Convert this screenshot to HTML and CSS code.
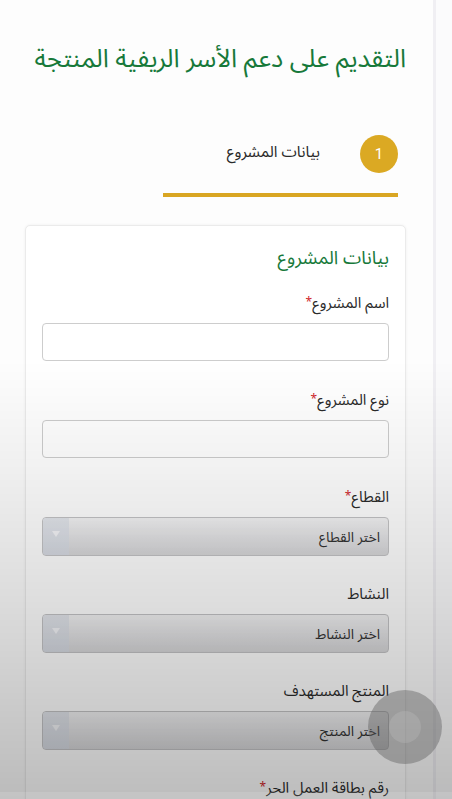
FILE: index.html
```html
<!DOCTYPE html>
<html lang="ar">
<head>
<meta charset="utf-8">
<title>التقديم على دعم الأسر الريفية المنتجة</title>
<link rel="stylesheet" href="styles.css">
</head>
<body>
<div class="page">
  <main class="main" dir="rtl">
    <h1 class="page-title">التقديم على دعم الأسر الريفية المنتجة</h1>

    <div class="stepper">
      <div class="step">
        <span class="step-num">1</span>
        <span class="step-label">بيانات المشروع</span>
      </div>
      <div class="step-bar"></div>
    </div>

    <section class="card">
      <h2 class="card-title">بيانات المشروع</h2>

      <div class="field">
        <label class="label">اسم المشروع<span class="req">*</span></label>
        <input class="input" type="text">
      </div>

      <div class="field">
        <label class="label">نوع المشروع<span class="req">*</span></label>
        <input class="input" type="text">
      </div>

      <div class="field">
        <label class="label">القطاع<span class="req">*</span></label>
        <div class="select"><span class="select-text">اختر القطاع</span><span class="select-arrow"></span></div>
      </div>

      <div class="field">
        <label class="label">النشاط</label>
        <div class="select"><span class="select-text">اختر النشاط</span><span class="select-arrow"></span></div>
      </div>

      <div class="field">
        <label class="label">المنتج المستهدف</label>
        <div class="select"><span class="select-text">اختر المنتج</span><span class="select-arrow"></span></div>
      </div>

      <div class="field">
        <label class="label">رقم بطاقة العمل الحر<span class="req">*</span></label>
        <input class="input" type="text">
      </div>
    </section>
  </main>
  <aside class="strip"></aside>
</div>
<div class="shade"></div>
<div class="touch"><span class="touch-core"></span></div>
<div class="navbar"></div>
</body>
</html>
```

FILE: styles.css
```css
html, body {
  margin: 0;
  padding: 0;
  background: #fdfdfd;
  font-family: "Noto Sans Arabic", "Noto Sans", "DejaVu Sans", sans-serif;
  overflow: hidden;
}

.page {
  display: flex;
  width: 452px;
  height: 799px;
  overflow: hidden;
}

.main {
  width: 433px;
  flex: none;
  box-sizing: border-box;
  padding: 0 27px 0 25px;
}

.strip {
  flex: 1;
  border-left: 3px solid #f0eff3;
  background: #fbfbfc;
}

.page-title {
  margin: 0;
  padding-top: 41px;
  height: 94px;
  box-sizing: border-box;
  font-size: 25.5px;
  font-weight: normal;
  line-height: 36px;
  color: #17793a;
  white-space: nowrap;
}

.stepper {
  width: 235px;
  margin-right: 8px;
}

.step {
  display: flex;
  align-items: center;
  gap: 40px;
  height: 40px;
  margin-top: 40px;
}

.step-num {
  width: 38px;
  height: 38px;
  border-radius: 50%;
  background: #dba923;
  color: #fff;
  font-family: "Roboto", sans-serif;
  font-size: 15px;
  display: flex;
  align-items: center;
  justify-content: center;
}

.step-label {
  font-size: 15.5px;
  color: #2a2a2a;
  margin-top: -4px;
}

.step-bar {
  height: 4px;
  background: #d9a623;
  margin-top: 19px;
}

.card {
  margin-top: 28px;
  border: 1px solid #ebebeb;
  border-radius: 5px;
  box-shadow: 0 0 3px rgba(0,0,0,0.06);
  background: #fff;
  padding: 18px 16px 40px 16px;
}

.card-title {
  margin: 0 0 17px 0;
  font-size: 18.5px;
  font-weight: normal;
  line-height: 30px;
  color: #17793a;
}

.field {
  display: flex;
  flex-direction: column;
  margin-bottom: 27px;
}

.field:nth-child(n+4) {
  margin-bottom: 26px;
}

.label {
  font-size: 15px;
  line-height: 24px;
  color: #2b2b2b;
  margin-bottom: 8px;
}

.req {
  color: #d0262c;
  font-size: 12px;
  vertical-align: top;
}

.input {
  height: 38px;
  box-sizing: border-box;
  border: 1px solid #cdcdcd;
  border-radius: 4px;
  background: #fff;
  margin: 0;
}

.select {
  height: 39px;
  box-sizing: border-box;
  border: 1px solid #c4c4c6;
  border-radius: 4px;
  background: linear-gradient(to bottom, #f3f3f4 0%, #e3e3e5 55%, #d7d7d9 100%);
  display: flex;
  align-items: center;
  justify-content: space-between;
  overflow: hidden;
}

.select-text {
  font-size: 14px;
  color: #333;
  padding-right: 8px;
  margin-top: 2px;
}

.select-arrow {
  width: 26px;
  align-self: stretch;
  background: linear-gradient(to bottom, #e3e6ec, #d6dae2);
  position: relative;
}

.select-arrow::after {
  content: "";
  position: absolute;
  left: 9px;
  top: 13px;
  border-left: 4px solid transparent;
  border-right: 4px solid transparent;
  border-top: 6px solid #f4f5f8;
}

.shade {
  position: fixed;
  inset: 0;
  pointer-events: none;
  background: linear-gradient(to bottom,
    rgba(0,0,0,0) 0%,
    rgba(0,0,0,0) 45%,
    rgba(0,0,0,0.05) 58%,
    rgba(0,0,0,0.13) 75%,
    rgba(0,0,0,0.26) 100%);
}

.touch {
  position: fixed;
  left: 368px;
  top: 690px;
  width: 74px;
  height: 74px;
  border-radius: 50%;
  background: rgba(90,90,90,0.42);
  display: flex;
  align-items: center;
  justify-content: center;
}

.touch-core {
  width: 32px;
  height: 32px;
  border-radius: 50%;
  background: rgba(200,200,200,0.25);
}

.navbar {
  position: fixed;
  left: 0;
  right: 0;
  bottom: 0;
  height: 7px;
  background: rgba(255,255,255,0.12);
}
```
